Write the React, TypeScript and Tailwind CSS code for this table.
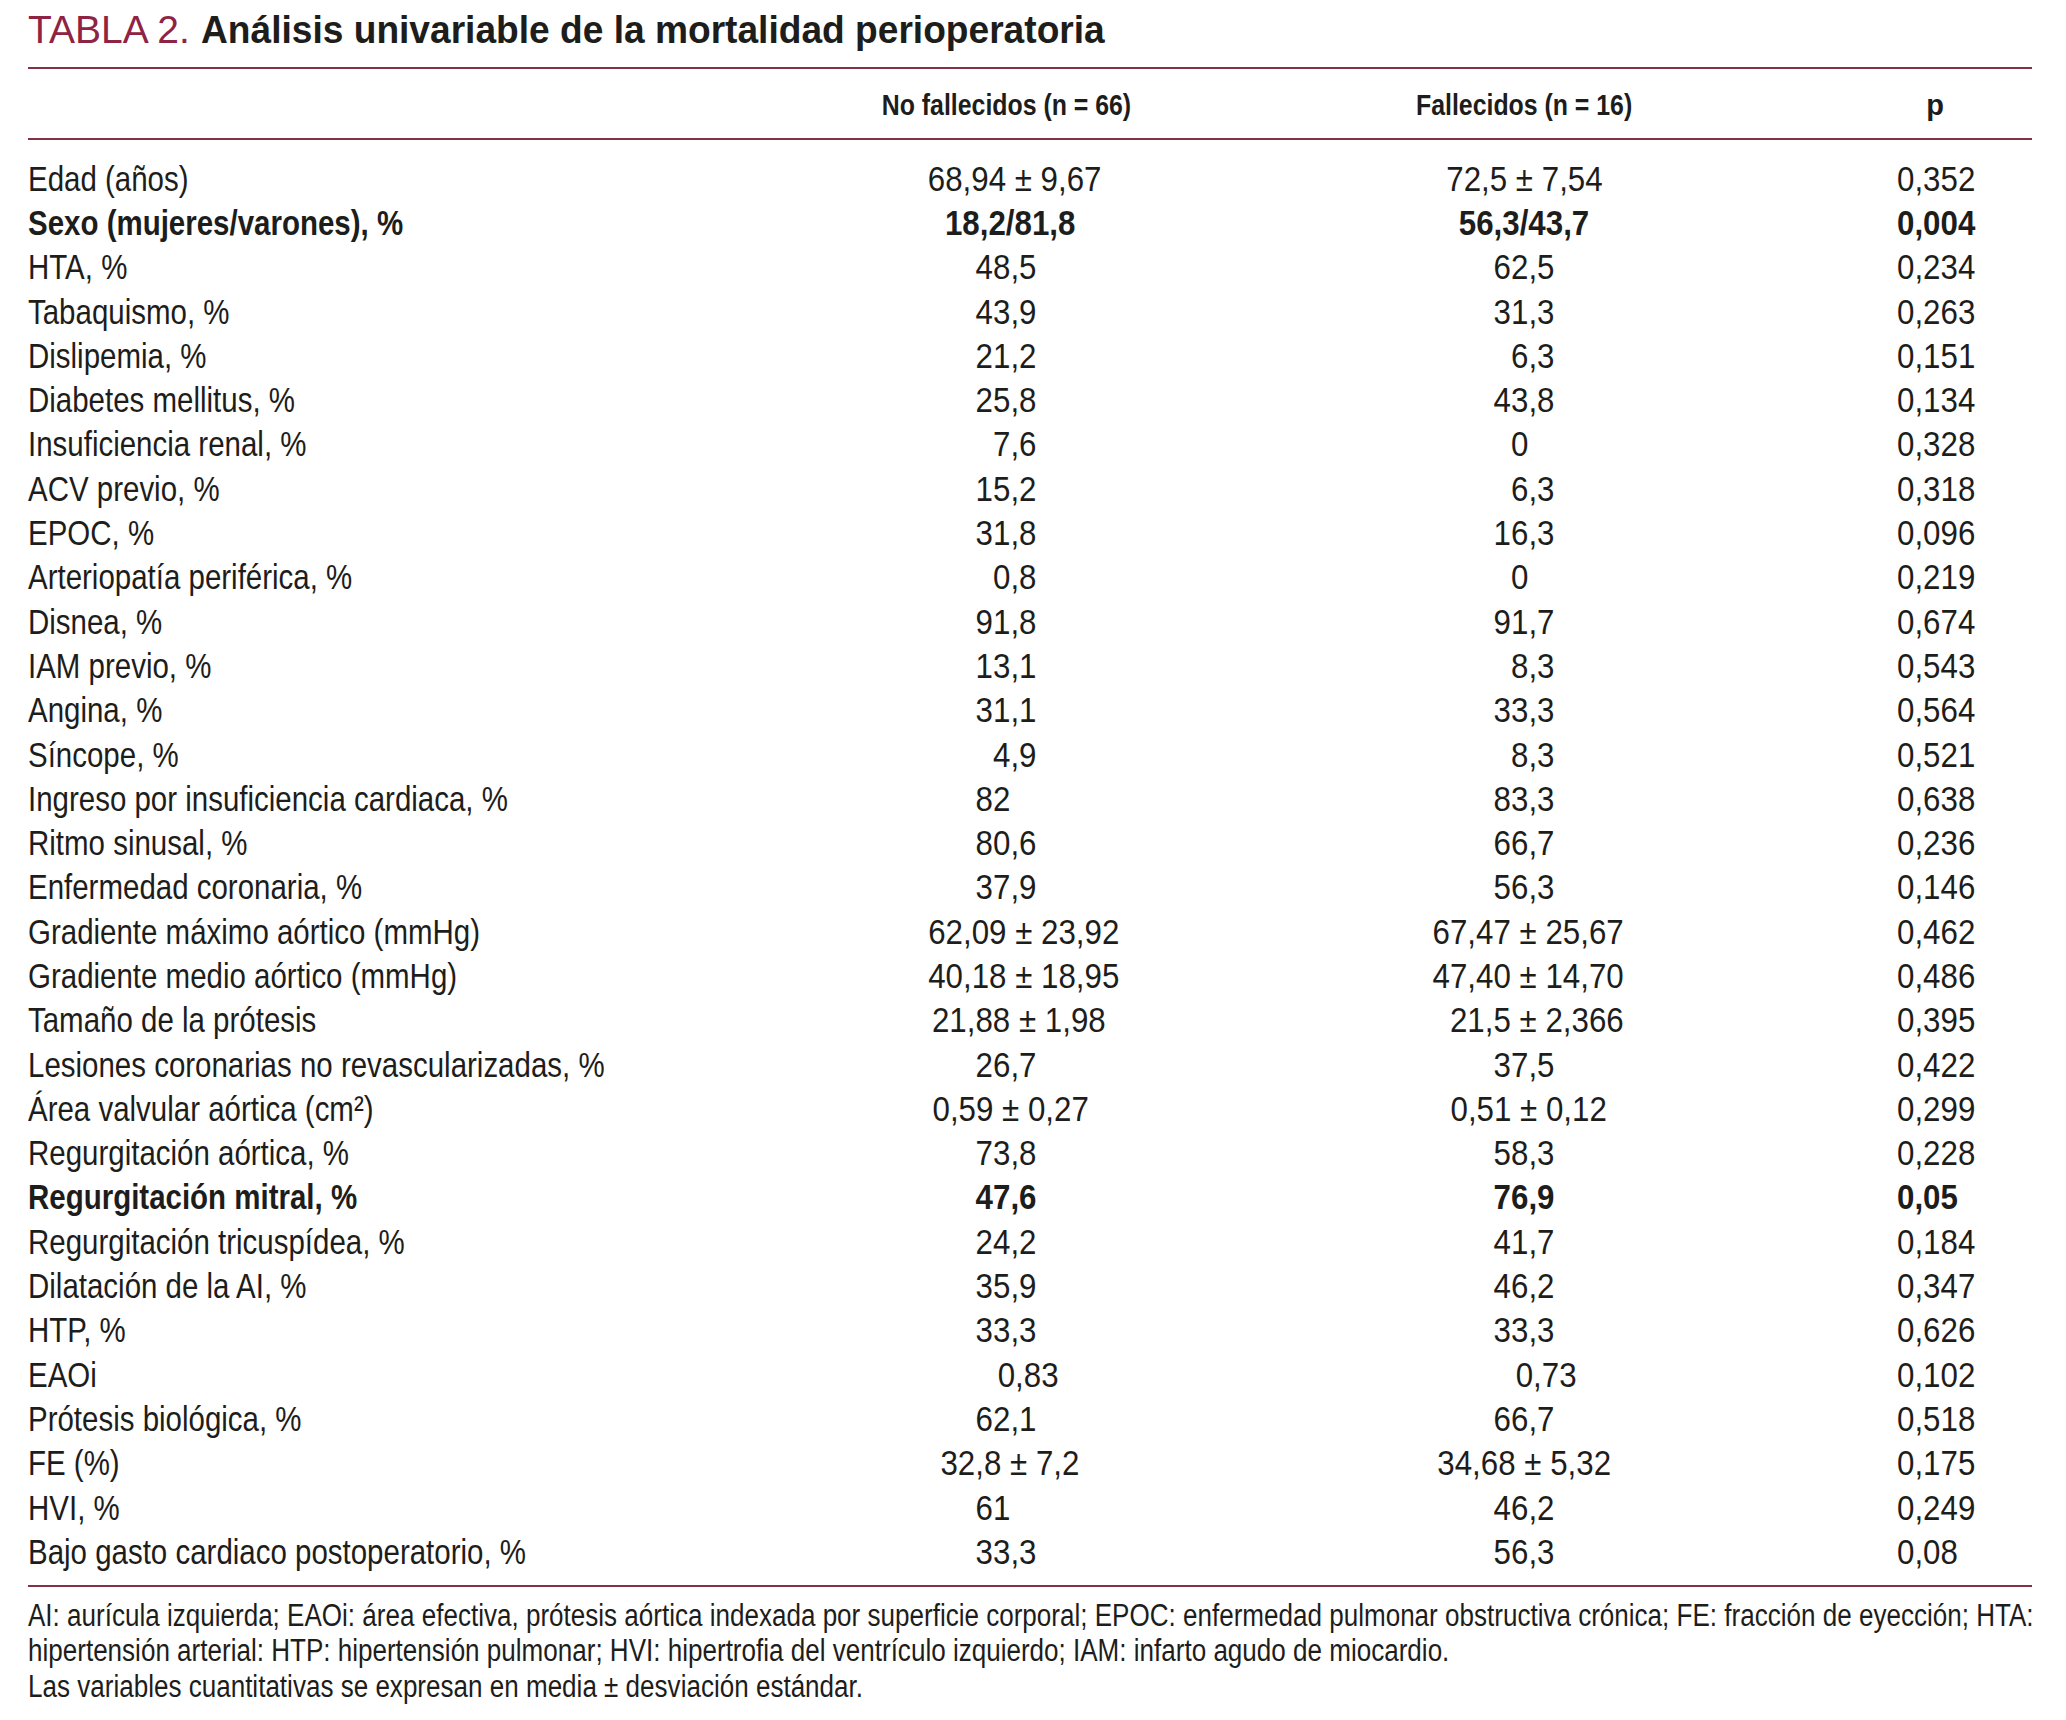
import React from "react";

type Cell = { v: string; pre?: string; post?: string };
const c = (v: string, pre?: string, post?: string): Cell => ({ v, pre, post });

type Row = { label: string; a: Cell; b: Cell; p: string; bold?: boolean };

const rows: Row[] = [
  { label: "Edad (años)", a: c("68,94 ± 9,67", "0"), b: c("72,5 ± 7,54"), p: "0,352" },
  { label: "Sexo (mujeres/varones), %", a: c("18,2/81,8", ","), b: c("56,3/43,7"), p: "0,004", bold: true },
  { label: "HTA, %", a: c("48,5"), b: c("62,5"), p: "0,234" },
  { label: "Tabaquismo, %", a: c("43,9"), b: c("31,3"), p: "0,263" },
  { label: "Dislipemia, %", a: c("21,2"), b: c("6,3", "0"), p: "0,151" },
  { label: "Diabetes mellitus, %", a: c("25,8"), b: c("43,8"), p: "0,134" },
  { label: "Insuficiencia renal, %", a: c("7,6", "0"), b: c("0", "0", ",0"), p: "0,328" },
  { label: "ACV previo, %", a: c("15,2"), b: c("6,3", "0"), p: "0,318" },
  { label: "EPOC, %", a: c("31,8"), b: c("16,3"), p: "0,096" },
  { label: "Arteriopatía periférica, %", a: c("0,8", "0"), b: c("0", "0", ",0"), p: "0,219" },
  { label: "Disnea, %", a: c("91,8"), b: c("91,7"), p: "0,674" },
  { label: "IAM previo, %", a: c("13,1"), b: c("8,3", "0"), p: "0,543" },
  { label: "Angina, %", a: c("31,1"), b: c("33,3"), p: "0,564" },
  { label: "Síncope, %", a: c("4,9", "0"), b: c("8,3", "0"), p: "0,521" },
  { label: "Ingreso por insuficiencia cardiaca, %", a: c("82", undefined, ",0"), b: c("83,3"), p: "0,638" },
  { label: "Ritmo sinusal, %", a: c("80,6"), b: c("66,7"), p: "0,236" },
  { label: "Enfermedad coronaria, %", a: c("37,9"), b: c("56,3"), p: "0,146" },
  { label: "Gradiente máximo aórtico (mmHg)", a: c("62,09 ± 23,92", "00"), b: c("67,47 ± 25,67", ","), p: "0,462" },
  { label: "Gradiente medio aórtico (mmHg)", a: c("40,18 ± 18,95", "00"), b: c("47,40 ± 14,70", ","), p: "0,486" },
  { label: "Tamaño de la prótesis", a: c("21,88 ± 1,98", "0,"), b: c("21,5 ± 2,366", "0,"), p: "0,395" },
  { label: "Lesiones coronarias no revascularizadas, %", a: c("26,7"), b: c("37,5"), p: "0,422" },
  { label: "Área valvular aórtica (cm²)", a: c("0,59 ± 0,27", ","), b: c("0,51 ± 0,12", ","), p: "0,299" },
  { label: "Regurgitación aórtica, %", a: c("73,8"), b: c("58,3"), p: "0,228" },
  { label: "Regurgitación mitral, %", a: c("47,6"), b: c("76,9"), p: "0,05", bold: true },
  { label: "Regurgitación tricuspídea, %", a: c("24,2"), b: c("41,7"), p: "0,184" },
  { label: "Dilatación de la AI, %", a: c("35,9"), b: c("46,2"), p: "0,347" },
  { label: "HTP, %", a: c("33,3"), b: c("33,3"), p: "0,626" },
  { label: "EAOi", a: c("0,83", "00,"), b: c("0,73", "00,"), p: "0,102" },
  { label: "Prótesis biológica, %", a: c("62,1"), b: c("66,7"), p: "0,518" },
  { label: "FE (%)", a: c("32,8 ± 7,2", ","), b: c("34,68 ± 5,32"), p: "0,175" },
  { label: "HVI, %", a: c("61", undefined, ",0"), b: c("46,2"), p: "0,249" },
  { label: "Bajo gasto cardiaco postoperatorio, %", a: c("33,3"), b: c("56,3"), p: "0,08" },
];

function Val({ cell }: { cell: Cell }) {
  return (
    <span className="inline-block whitespace-pre scale-x-[0.894]">
      {cell.pre && <span className="invisible">{cell.pre}</span>}
      {cell.v}
      {cell.post && <span className="invisible">{cell.post}</span>}
    </span>
  );
}

export default function App() {
  return (
    <div className="w-[2066px] min-h-[1720px] overflow-hidden bg-white text-[#1d1d1b] font-['Liberation_Sans',Arial,sans-serif] pl-[28px] pr-[34px]">
      <div className="h-[67px] pt-[10px] text-[39px] leading-[40px] whitespace-nowrap">
        <span className="text-[#8f2343]">TABLA 2.</span>{" "}
        <span className="inline-block origin-left scale-x-[0.952] font-bold">
          Análisis univariable de la mortalidad perioperatoria
        </span>
      </div>
      <div className="h-[2px] bg-[#853044]" />
      <div className="grid grid-cols-[732px_492px_544px_1fr] h-[69px] pt-[4px] items-center text-[29px] font-bold leading-none whitespace-nowrap">
        <div />
        <div className="text-center">
          <span className="inline-block scale-x-[0.857]">No fallecidos (n = 66)</span>
        </div>
        <div className="text-center">
          <span className="inline-block scale-x-[0.857]">Fallecidos (n = 16)</span>
        </div>
        <div className="pl-[101px]">
          <div className="w-[76px] text-center">p</div>
        </div>
      </div>
      <div className="h-[2px] bg-[#853044]" />
      <div className="pt-[16px] text-[35px] leading-none">
        {rows.map((r, i) => (
          <div
            key={i}
            className={`grid grid-cols-[732px_492px_544px_1fr] h-[44.3px] items-center whitespace-nowrap ${r.bold ? "font-bold" : ""}`}
          >
            <div>
              <span className="inline-block origin-left scale-x-[0.842]">{r.label}</span>
            </div>
            <div className="text-center">
              <Val cell={r.a} />
            </div>
            <div className="text-center">
              <Val cell={r.b} />
            </div>
            <div className="pl-[101px]">
              <span className="inline-block origin-left scale-x-[0.894]">{r.p}</span>
            </div>
          </div>
        ))}
      </div>
      <div className="mt-[11px] h-[2px] bg-[#853044]" />
      <div className="pt-[11px] text-[31px] leading-[35.6px] whitespace-nowrap">
        <div>
          <span className="inline-block origin-left scale-x-[0.84]">
            AI: aurícula izquierda; EAOi: área efectiva, prótesis aórtica indexada por superficie corporal; EPOC: enfermedad pulmonar obstructiva crónica; FE: fracción de eyección; HTA:
          </span>
        </div>
        <div>
          <span className="inline-block origin-left scale-x-[0.84]">
            hipertensión arterial: HTP: hipertensión pulmonar; HVI: hipertrofia del ventrículo izquierdo; IAM: infarto agudo de miocardio.
          </span>
        </div>
        <div>
          <span className="inline-block origin-left scale-x-[0.84]">
            Las variables cuantitativas se expresan en media ± desviación estándar.
          </span>
        </div>
      </div>
    </div>
  );
}
